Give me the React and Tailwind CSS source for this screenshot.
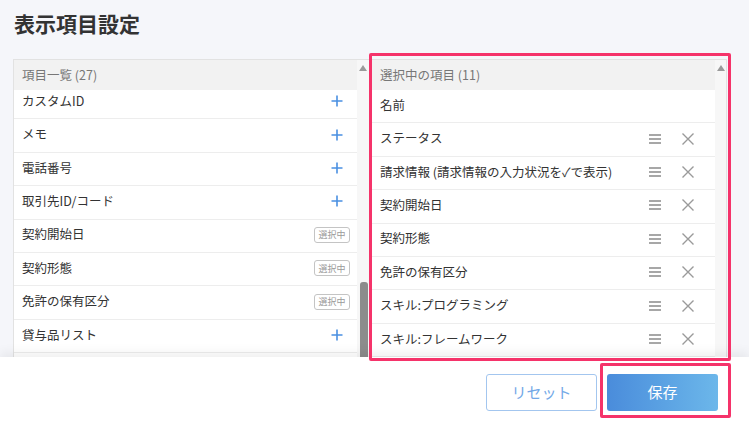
import React from 'react'

const available = [
  { name: 'カスタムID', selected: false },
  { name: 'メモ', selected: false },
  { name: '電話番号', selected: false },
  { name: '取引先ID/コード', selected: false },
  { name: '契約開始日', selected: true },
  { name: '契約形態', selected: true },
  { name: '免許の保有区分', selected: true },
  { name: '貸与品リスト', selected: false },
]

const chosen = [
  { name: '名前', fixed: true },
  { name: 'ステータス' },
  { name: '請求情報 (請求情報の入力状況を✓で表示)' },
  { name: '契約開始日' },
  { name: '契約形態' },
  { name: '免許の保有区分' },
  { name: 'スキル:プログラミング' },
  { name: 'スキル:フレームワーク' },
]

const PlusIcon = () => (
  <svg width="12" height="12" viewBox="0 0 12 12" className="mr-[7px]">
    <path d="M6 0.5v11M0.5 6h11" stroke="#4a90e2" strokeWidth="1.6" />
  </svg>
)

const DragIcon = () => (
  <svg width="12" height="10" viewBox="0 0 12 10">
    <path d="M0 1h12M0 5h12M0 9h12" stroke="#8a8a8a" strokeWidth="1.6" />
  </svg>
)

const CloseIcon = () => (
  <svg width="12" height="12" viewBox="0 0 12 12">
    <path d="M0.5 0.5l11 11M11.5 0.5l-11 11" stroke="#9a9a9a" strokeWidth="1.4" />
  </svg>
)

const ScrollArrow = () => (
  <svg width="8" height="6" viewBox="0 0 8 6" className="mx-auto">
    <path d="M4 0L8 6H0z" fill="#9a9a9a" />
  </svg>
)

const Badge = () => (
  <span className="h-[16px] w-[36px] flex items-center justify-center border border-[#c4c4c4] rounded-[3px] text-[9px] text-[#9a9a9a] leading-none">
    選択中
  </span>
)

export default function App() {
  return (
    <div className="relative w-[749px] h-[425px] overflow-hidden bg-white font-['Noto_Sans_CJK_JP','Noto_Sans',sans-serif]">
      <div className="h-[357px] bg-[#f5f6fa] pl-[13px] pt-[8px] overflow-hidden">
        <h1 className="pl-[1px] text-[21px] leading-[30px] font-bold text-[#333]">表示項目設定</h1>

        <div className="mt-[21px] flex gap-[1px]">
          {/* Item list */}
          <div className="w-[357px] h-[300px] flex border border-[#e2e2e2] bg-white">
            <div className="flex-1 flex flex-col">
              <div className="h-[30px] shrink-0 bg-[#f2f2f2] flex items-center pl-[8px] text-[12.5px] text-[#777]">
                項目一覧 (27)
              </div>
              <div className="flex-1 overflow-hidden">
                <div className="-mt-[4px]">
                  {available.map((item) => (
                    <div
                      key={item.name}
                      className="h-[33.4px] border-b border-[#ededed] flex items-center justify-between pl-[8px] pr-[7px] pb-[2px] text-[12.5px] text-[#333]"
                    >
                      <span>{item.name}</span>
                      {item.selected ? <Badge /> : <PlusIcon />}
                    </div>
                  ))}
                </div>
              </div>
            </div>
            <div className="w-[12px] bg-[#f7f7f7] flex flex-col pt-[5px]">
              <ScrollArrow />
              <div className="mt-auto ml-[3px] w-[8px] h-[76px] bg-[#8c8c8c] rounded-t-[3px]" />
            </div>
          </div>

          {/* Selected list */}
          <div className="w-[356px] h-[300px] flex border border-[#e2e2e2] bg-white">
            <div className="flex-1 flex flex-col">
              <div className="h-[30px] shrink-0 bg-[#f2f2f2] flex items-center pl-[8px] text-[12.5px] text-[#777]">
                選択中の項目 (11)
              </div>
              <div className="flex-1 overflow-hidden">
                {chosen.map((item) => (
                  <div
                    key={item.name}
                    className="h-[33.4px] border-b border-[#ededed] flex items-center pl-[8px] pr-[21px] pb-[2px] text-[12.5px] text-[#333]"
                  >
                    <span className="flex-1">{item.name}</span>
                    {!item.fixed && (
                      <div className="flex items-center gap-[21px]">
                        <DragIcon />
                        <CloseIcon />
                      </div>
                    )}
                  </div>
                ))}
              </div>
            </div>
            <div className="w-[11px] bg-[#f7f7f7] pt-[5px]">
              <ScrollArrow />
            </div>
          </div>
        </div>
      </div>

      {/* Footer */}
      <div className="relative z-10 h-[68px] bg-white shadow-[0_-5px_10px_rgba(0,0,0,0.06)] flex justify-end items-start pt-[17px] pr-[31px] gap-[10px]">
        <button className="w-[111px] h-[37px] border border-[#a3c6ef] rounded-[3px] bg-white text-[15px] text-[#72a8e7]">
          リセット
        </button>
        <button className="w-[111px] h-[37px] rounded-[3px] bg-gradient-to-r from-[#4a8cdb] to-[#6cb7ea] text-[15px] text-white">
          保存
        </button>
      </div>

      {/* Highlight annotations */}
      <div className="absolute z-20 left-[369px] top-[53px] w-[362px] h-[308px] border-[3.5px] border-[#f5336a] rounded-[2px] pointer-events-none" />
      <div className="absolute z-20 left-[600px] top-[363px] w-[131px] h-[55px] border-[3.5px] border-[#f5336a] rounded-[2px] pointer-events-none" />
    </div>
  )
}
